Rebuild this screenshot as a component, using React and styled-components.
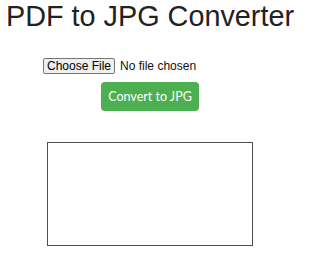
import React, { useState } from 'react';
import styled, { createGlobalStyle } from 'styled-components';

const GlobalStyle = createGlobalStyle`
  body {
    margin: 0;
    background: #ffffff;
    font-family: "Liberation Sans", Arial, sans-serif;
  }
`;

const Page = styled.main`
  display: flex;
  flex-direction: column;
  align-items: center;
  width: 300px;
`;

const Title = styled.h1`
  margin: 0;
  font-family: "Liberation Sans", Arial, sans-serif;
  font-size: 28.8px;
  font-weight: 400;
  line-height: 33px;
  color: #222222;
`;

const FilePicker = styled.label`
  display: flex;
  align-items: center;
  gap: 5px;
  width: 214px;
  margin-top: 25px;
  font-family: "Liberation Sans", Arial, sans-serif;
  font-size: 12px;
  color: #111111;
  cursor: default;

  input {
    display: none;
  }
`;

const FileButton = styled.span`
  display: inline-flex;
  align-items: center;
  height: 16px;
  padding: 0 3px;
  box-sizing: border-box;
  background: #efefef;
  border: 1px solid #767676;
  border-radius: 2px;
  color: #000000;
  line-height: 13px;
`;

const FileStatus = styled.span`
  line-height: 13px;
`;

const ConvertButton = styled.button`
  margin-top: 8px;
  width: 98px;
  height: 29px;
  padding: 0;
  border: none;
  border-radius: 4px;
  background: #4caf50;
  color: #ffffff;
  font-family: Lato, "Noto Sans", sans-serif;
  font-size: 12.5px;
  cursor: pointer;
`;

const Preview = styled.div`
  margin-top: 31px;
  width: 206px;
  height: 104px;
  box-sizing: border-box;
  border: 1px solid #4f4f4f;
  background: #ffffff;
`;

export default function App() {
  const [fileName, setFileName] = useState('');

  return (
    <>
      <GlobalStyle />
      <Page>
        <Title>PDF to JPG Converter</Title>
        <FilePicker>
          <input
            type="file"
            accept="application/pdf"
            onChange={(e) => setFileName(e.target.files[0] ? e.target.files[0].name : '')}
          />
          <FileButton>Choose File</FileButton>
          <FileStatus>{fileName || 'No file chosen'}</FileStatus>
        </FilePicker>
        <ConvertButton type="button">Convert to JPG</ConvertButton>
        <Preview />
      </Page>
    </>
  );
}
